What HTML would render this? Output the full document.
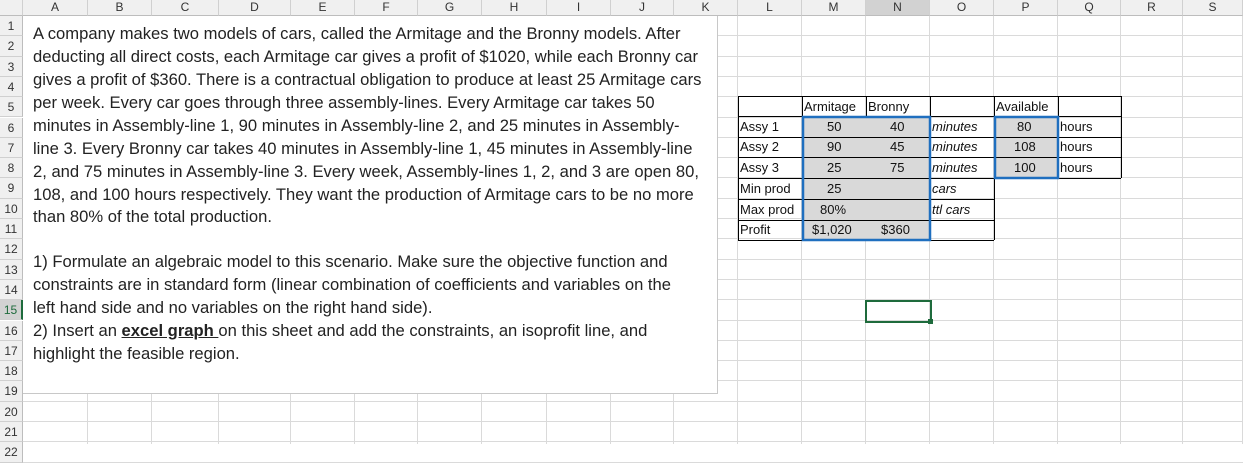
<!DOCTYPE html>
<html><head><meta charset="utf-8"><style>
*{margin:0;padding:0;box-sizing:border-box}
body{width:1243px;height:444px;overflow:hidden;background:#fff;font-family:"Liberation Sans",sans-serif;position:relative}
.a{position:absolute}
.ch{position:absolute;top:0;height:16px;background:#f0f0f0;border-right:1px solid #d0d0d0;border-bottom:1px solid #bdbdbd;font-size:12px;text-align:center;line-height:15px;color:#333}
.rh{position:absolute;left:0;width:23px;background:#f0f0f0;border-bottom:1px solid #d0d0d0;border-right:1px solid #bdbdbd;font-size:12px;text-align:center;color:#333}
.vl{position:absolute;top:16px;bottom:0;width:1px;background:#dadada}
.hl{position:absolute;left:23px;right:0;height:1px;background:#dadada}
.tb{position:absolute;left:23px;top:16px;width:695px;height:378px;background:#fff;border-right:1px solid #c8c8c8;border-bottom:1px solid #c8c8c8}
.tb div{position:absolute;left:10px;font-size:16.6px;white-space:nowrap;color:#222}
.c{position:absolute;font-size:13px;height:20px;line-height:20px;white-space:nowrap;color:#111}
</style></head><body>
<div id="grid"></div>
<script>
var cols=[23,88,152,219,291,355,418,482,547,611,674,738,802,866,930,994,1058,1121,1183,1243];
var names="ABCDEFGHIJKLMNOPQRS";
var h="";
for(var i=0;i<19;i++){var bg=(i==13)?"background:#d2d2d2;":"";h+='<div class="ch" style="left:'+cols[i]+'px;width:'+(cols[i+1]-cols[i])+'px;'+bg+'">'+names[i]+'</div>';h+='<div class="vl" style="left:'+(cols[i+1]-1)+'px"></div>';}
h+='<div class="ch" style="left:0;width:23px"></div>';
for(var r=0;r<22;r++){var t=16+r*20.3;var bg=(r==14)?"background:#d2d2d2;color:#1e6b3c;border-right:2px solid #1e6b3c;":"";h+='<div class="rh" style="top:'+t+'px;height:20.3px;line-height:20px;'+bg+'">'+(r+1)+'</div>';h+='<div class="hl" style="top:'+(t+19.3)+'px"></div>';}
document.getElementById("grid").innerHTML=h;
</script>
<div class="tb">
<div style="top:8px">A company makes two models of cars, called the Armitage and the Bronny models. After</div>
<div style="top:31px">deducting all direct costs, each Armitage car gives a profit of $1020, while each Bronny car</div>
<div style="top:54px">gives a profit of $360. There is a contractual obligation to produce at least 25 Armitage cars</div>
<div style="top:77px">per week. Every car goes through three assembly-lines. Every Armitage car takes 50</div>
<div style="top:100px">minutes in Assembly-line 1, 90 minutes in Assembly-line 2, and 25 minutes in Assembly-</div>
<div style="top:123px">line 3. Every Bronny car takes 40 minutes in Assembly-line 1, 45 minutes in Assembly-line</div>
<div style="top:146px">2, and 75 minutes in Assembly-line 3. Every week, Assembly-lines 1, 2, and 3 are open 80,</div>
<div style="top:169px">108, and 100 hours respectively. They want the production of Armitage cars to be no more</div>
<div style="top:191px">than 80% of the total production.</div>
<div style="top:236px">1) Formulate an algebraic model to this scenario. Make sure the objective function and</div>
<div style="top:259px">constraints are in standard form  (linear combination of coefficients and variables on the</div>
<div style="top:282px">left hand side and no variables on the right hand side).</div>
<div style="top:305px">2) Insert an <b><u>excel graph </u></b>on this sheet and add the constraints, an isoprofit line, and</div>
<div style="top:328px">highlight the feasible region.</div>
</div>
<div class="a" style="left:803px;top:117px;width:127px;height:123px;background:#d9d9d9"></div>
<div class="a" style="left:995px;top:117px;width:63px;height:62px;background:#d9d9d9"></div>
<svg class="a" style="left:0;top:0" width="1243" height="444">
<g stroke="#000" stroke-width="1" fill="none">
<rect x="738.5" y="96.5" width="383" height="20"/>
<line x1="738.5" y1="96" x2="738.5" y2="240"/>
<line x1="802.5" y1="96" x2="802.5" y2="117"/><line x1="866.5" y1="96" x2="866.5" y2="117"/>
<line x1="930.5" y1="96" x2="930.5" y2="240"/><line x1="994.5" y1="96" x2="994.5" y2="117"/><line x1="1058.5" y1="96" x2="1058.5" y2="178"/>
<line x1="1121.5" y1="96" x2="1121.5" y2="178"/><line x1="994.5" y1="178" x2="994.5" y2="240"/>
<line x1="738" y1="137.5" x2="1121" y2="137.5"/><line x1="738" y1="157.5" x2="1121" y2="157.5"/><line x1="738" y1="178.5" x2="1121" y2="178.5"/>
<line x1="738" y1="199.5" x2="994" y2="199.5"/><line x1="738" y1="220.5" x2="994" y2="220.5"/><line x1="738" y1="240.5" x2="994" y2="240.5"/>
</g>
<rect x="803" y="117" width="127" height="123" fill="none" stroke="#1f6fbf" stroke-width="2.5"/>
<rect x="995" y="117" width="63" height="61" fill="none" stroke="#1f6fbf" stroke-width="2.5"/>
<rect x="866" y="301" width="65" height="21" fill="none" stroke="#1e6b3c" stroke-width="2"/>
<rect x="928" y="319" width="5" height="5" fill="#1e6b3c"/>
</svg>
<div class="c" style="left:804px;top:97px">Armitage</div><div class="c" style="left:868px;top:97px">Bronny</div><div class="c" style="left:996px;top:97px">Available</div>
<div class="c" style="left:740px;top:117px">Assy 1</div><div class="c" style="left:740px;top:137px">Assy 2</div><div class="c" style="left:740px;top:158px">Assy 3</div>
<div class="c" style="left:740px;top:179px">Min prod</div><div class="c" style="left:740px;top:200px">Max prod</div><div class="c" style="left:740px;top:220px">Profit</div>
<div class="c" style="left:827px;top:117px">50</div><div class="c" style="left:890px;top:117px">40</div>
<div class="c" style="left:827px;top:137px">90</div><div class="c" style="left:890px;top:137px">45</div>
<div class="c" style="left:827px;top:158px">25</div><div class="c" style="left:890px;top:158px">75</div>
<div class="c" style="left:827px;top:179px">25</div><div class="c" style="left:820px;top:200px">80%</div>
<div class="c" style="left:812px;top:220px">$1,020</div><div class="c" style="left:881px;top:220px">$360</div>
<div class="c" style="left:932px;top:117px;font-style:italic">minutes</div><div class="c" style="left:932px;top:137px;font-style:italic">minutes</div><div class="c" style="left:932px;top:158px;font-style:italic">minutes</div>
<div class="c" style="left:932px;top:179px;font-style:italic">cars</div><div class="c" style="left:932px;top:200px;font-style:italic">ttl cars</div>
<div class="c" style="left:1017px;top:117px">80</div><div class="c" style="left:1014px;top:137px">108</div><div class="c" style="left:1014px;top:158px">100</div>
<div class="c" style="left:1060px;top:117px">hours</div><div class="c" style="left:1060px;top:137px">hours</div><div class="c" style="left:1060px;top:158px">hours</div>
</body></html>
